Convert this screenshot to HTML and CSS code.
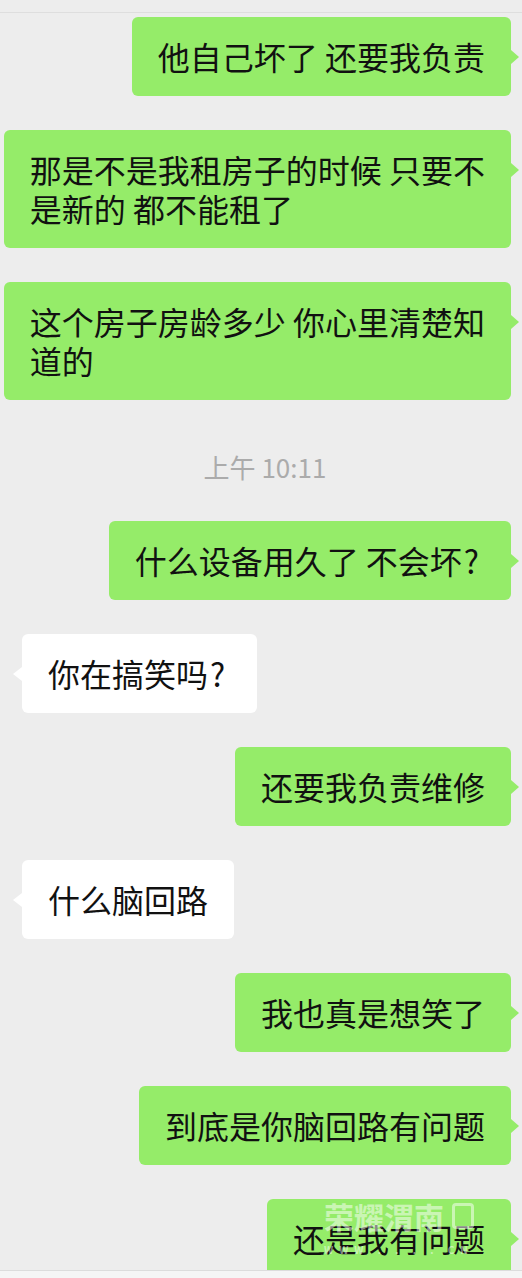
FILE: index.html
```html
<!DOCTYPE html>
<html lang="zh-CN">
<head>
  <meta charset="UTF-8" />
  <meta name="viewport" content="width=device-width, initial-scale=1.0"/>
  <title>聊天记录</title>
  <link rel="stylesheet" href="styles.css">
</head>
<body>
  <div class="screen">
    <div class="top-bar"></div>

    <div class="chat">
      <div class="row mine"><div class="bubble">他自己坏了 还要我负责</div></div>
      <div class="row mine"><div class="bubble">那是不是我租房子的时候 只要不<br>是新的 都不能租了</div></div>
      <div class="row mine"><div class="bubble">这个房子房龄多少 你心里清楚知<br>道的</div></div>

      <div class="time">上午 10:11</div>

      <div class="row mine"><div class="bubble">什么设备用久了 不会坏<span class="q">?</span></div></div>
      <div class="row theirs"><div class="bubble">你在搞笑吗<span class="q">?</span></div></div>
      <div class="row mine"><div class="bubble">还要我负责维修</div></div>
      <div class="row theirs"><div class="bubble">什么脑回路</div></div>
      <div class="row mine"><div class="bubble">我也真是想笑了</div></div>
      <div class="row mine"><div class="bubble">到底是你脑回路有问题</div></div>
      <div class="row mine"><div class="bubble">还是我有问题</div></div>
    </div>

    <div class="bottom-bar"></div>

    <!-- watermark over the last message -->
    <div class="watermark">
      <div class="wm-title">荣耀渭南<span class="wm-icon"></span></div>
      <div class="wm-url">WWW . . . . CN</div>
    </div>
  </div>
</body>
</html>
```

FILE: styles.css
```css
* {
  box-sizing: border-box;
  margin: 0;
  padding: 0;
}

body {
  font-family: "Noto Sans CJK SC", "Noto Sans", sans-serif;
  background-color: #ededed;
  color: #111;
}

.screen {
  position: relative;
  width: 522px;
  height: 1278px;
  overflow: hidden;
}

.top-bar {
  height: 13px;
  border-bottom: 1px solid #dedede;
}

.chat {
  height: 1257px;
  overflow: hidden;
  display: flex;
  flex-direction: column;
  gap: 34px;
  padding-top: 4px;
}

.row {
  display: flex;
}

.row.mine {
  justify-content: flex-end;
  padding-right: 11px;
}

.row.theirs {
  justify-content: flex-start;
  padding-left: 22px;
}

.bubble {
  position: relative;
  font-size: 32px;
  line-height: 39px;
  padding: 20px 26px;
  border-radius: 6px;
  white-space: nowrap;
}

/* the half-width question mark sits wider in the original font */
.bubble .q {
  margin-left: 2px;
  margin-right: 6px;
}

.mine .bubble {
  background-color: #95ec69;
}

.theirs .bubble {
  background-color: #ffffff;
}

/* bubble tails */
.bubble::after {
  content: "";
  position: absolute;
  top: 33px;
  border-top: 7px solid transparent;
  border-bottom: 7px solid transparent;
}

.mine .bubble::after {
  right: -8px;
  border-left: 8px solid #95ec69;
}

.theirs .bubble::after {
  left: -9px;
  border-right: 9px solid #ffffff;
}

.time {
  text-align: center;
  font-size: 26px;
  line-height: 30px;
  color: #ababab;
  padding: 18px 0 5px 8px;
}

.bottom-bar {
  height: 8px;
  border-top: 1px solid #dcdcdc;
  background-color: #f5f5f5;
}

.watermark {
  position: absolute;
  left: 324px;
  top: 1198px;
  color: rgba(255, 255, 255, 0.5);
}

.wm-title {
  display: flex;
  align-items: center;
  font-size: 30px;
  line-height: 36px;
  font-weight: 700;
}

.wm-icon {
  display: inline-block;
  width: 22px;
  height: 26px;
  margin-left: 8px;
  border: 3px solid rgba(255, 255, 255, 0.5);
  border-radius: 4px;
}

.wm-url {
  font-size: 10px;
  line-height: 14px;
  letter-spacing: 6px;
  margin-top: 9px;
  font-weight: 700;
}
```
